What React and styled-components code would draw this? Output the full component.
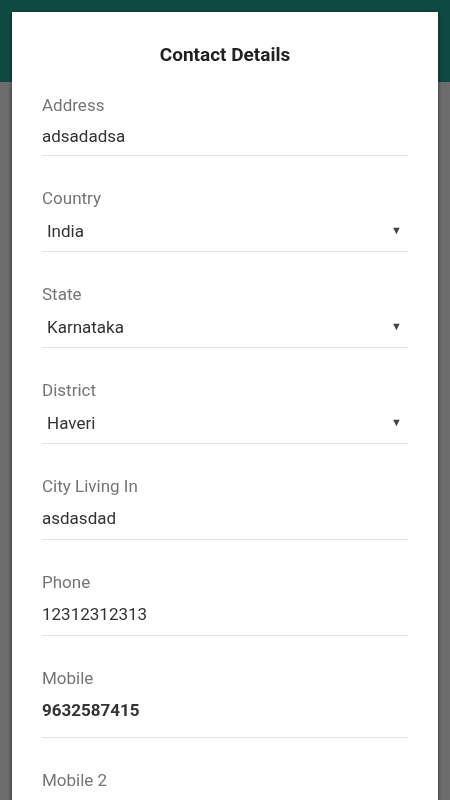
import React from "react";
import styled, { createGlobalStyle } from "styled-components";

const GlobalStyle = createGlobalStyle`
  html, body {
    margin: 0;
    padding: 0;
    background: #fafafa;
    font-family: Roboto, "Noto Sans", "Liberation Sans", sans-serif;
  }
`;

// Page underneath the dialog
const Page = styled.div`
  height: 800px;
  background: #fafafa;
`;

const AppBar = styled.header`
  height: 82px;
  background: #23ac99;
`;

// Dialog
const Backdrop = styled.div`
  position: fixed;
  inset: 0;
  background: rgba(0, 0, 0, 0.57);
  padding: 12px 12px 0;
  overflow: hidden;
`;

const Card = styled.div`
  background: #fff;
  min-height: 900px;
  padding: 31px 30px 0;
  box-shadow: 0 1px 4px rgba(0, 0, 0, 0.6);
`;

const Title = styled.h2`
  margin: 0 0 28px;
  font-size: 19px;
  line-height: 24px;
  font-weight: 700;
  color: #212121;
  text-align: center;
`;

const Field = styled.div`
  border-bottom: 1px solid #e4e4e4;
  padding-bottom: ${(p) => (p.$strong ? 15 : p.$select ? 8 : p.$first ? 7 : 9)}px;
  & + & {
    margin-top: ${(p) => (p.$after ? 32 : 31)}px;
  }
`;

const Label = styled.div`
  font-size: 17px;
  line-height: 20px;
  color: #757575;
`;

const Value = styled.div`
  display: flex;
  align-items: center;
  justify-content: space-between;
  margin-top: ${(p) => (p.$select ? 11 : p.$first ? 9 : 10)}px;
  padding-left: ${(p) => (p.$select ? 5 : 0)}px;
  min-height: 24px;
  font-size: 17px;
  line-height: 24px;
  font-weight: ${(p) => (p.$strong ? 700 : 400)};
  color: #333;
`;

const Caret = styled.span`
  font-size: 11px;
  line-height: 24px;
  color: #444;
  margin-right: 6px;
`;

const fields = [
  { label: "Address", value: "adsadadsa", first: true },
  { label: "Country", value: "India", select: true },
  { label: "State", value: "Karnataka", select: true },
  { label: "District", value: "Haveri", select: true },
  { label: "City Living In", value: "asdasdad" },
  { label: "Phone", value: "12312312313" },
  { label: "Mobile", value: "9632587415", strong: true },
  { label: "Mobile 2", value: "", after: true },
];

const App = () => (
  <>
    <GlobalStyle />
    <Page>
      <AppBar />
    </Page>
    <Backdrop>
      <Card>
        <Title>Contact Details</Title>
        {fields.map((f) => (
          <Field
            key={f.label}
            $first={f.first}
            $select={f.select}
            $strong={f.strong}
            $after={f.after}
          >
            <Label>{f.label}</Label>
            <Value $first={f.first} $select={f.select} $strong={f.strong}>
              <span>{f.value}</span>
              {f.select && <Caret>▼</Caret>}
            </Value>
          </Field>
        ))}
      </Card>
    </Backdrop>
  </>
);

export default App;
